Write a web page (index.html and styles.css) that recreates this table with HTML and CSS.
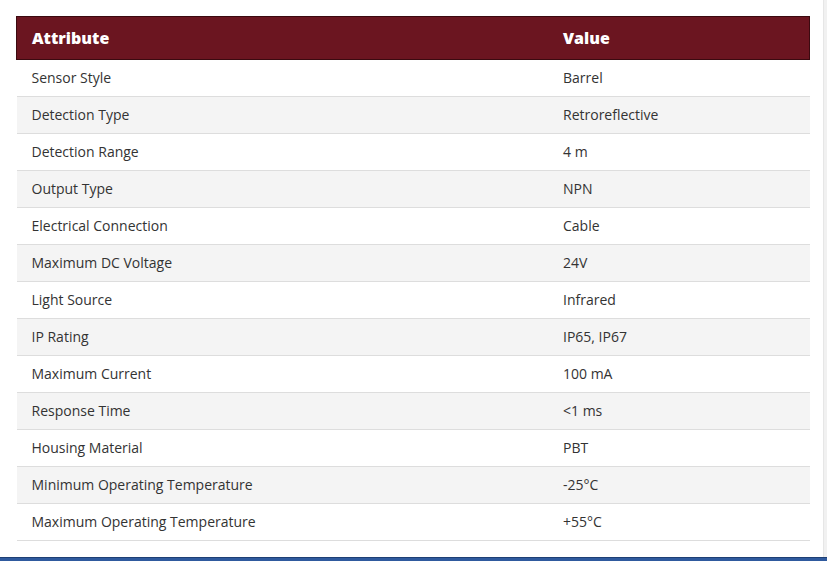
FILE: index.html
```html
<!DOCTYPE html>
<html>
<head>
<meta charset="utf-8">
<link rel="stylesheet" href="styles.css">
</head>
<body>
<div class="page">
  <div class="content">
    <table class="spec">
      <thead>
        <tr><th class="c1">Attribute</th><th>Value</th></tr>
      </thead>
      <tbody>
        <tr><td>Sensor Style</td><td>Barrel</td></tr>
        <tr><td>Detection Type</td><td>Retroreflective</td></tr>
        <tr><td>Detection Range</td><td>4 m</td></tr>
        <tr><td>Output Type</td><td>NPN</td></tr>
        <tr><td>Electrical Connection</td><td>Cable</td></tr>
        <tr><td>Maximum DC Voltage</td><td>24V</td></tr>
        <tr><td>Light Source</td><td>Infrared</td></tr>
        <tr><td>IP Rating</td><td>IP65, IP67</td></tr>
        <tr><td>Maximum Current</td><td>100 mA</td></tr>
        <tr><td>Response Time</td><td>&lt;1 ms</td></tr>
        <tr><td>Housing Material</td><td>PBT</td></tr>
        <tr><td>Minimum Operating Temperature</td><td>-25°C</td></tr>
        <tr><td>Maximum Operating Temperature</td><td>+55°C</td></tr>
      </tbody>
    </table>
  </div>
  <div class="edge"></div>
</div>
<div class="footerbar"></div>
</body>
</html>
```
FILE: styles.css
```css
html, body {
  margin: 0;
  padding: 0;
  background: #ffffff;
}
body {
  font-family: "Open Sans", "Noto Sans", sans-serif;
  color: #333333;
  width: 827px;
  height: 561px;
  overflow: hidden;
}
.page {
  display: flex;
  height: 557px;
}
.content {
  flex: 1;
  padding: 16px 13px 0 16px;
}
.edge {
  width: 4px;
  background: #f1f1f1;
  border-left: 1px solid #e6e6e6;
}
.spec {
  width: 794px;
  border-collapse: collapse;
  font-size: 14px;
}
.spec thead th {
  background: #6b1520;
  color: #ffffff;
  font-weight: 800;
  font-size: 16px;
  text-align: left;
  height: 42px;
  padding: 0 15px;
  border-top: 1px solid #3b0a10;
  border-bottom: 1px solid #3b0a10;
}
.spec thead th:first-child { border-left: 1px solid #3b0a10; }
.spec thead th:last-child { border-right: 1px solid #3b0a10; }
.spec .c1 { width: 501px; }
.spec tbody td {
  height: 36px;
  padding: 0 15px;
  border-bottom: 1px solid #dddddd;
  line-height: 20px;
}
.spec tbody tr:nth-child(even) td {
  background: #f4f4f4;
}
.footerbar {
  height: 4px;
  background: #2f5a9e;
  border-top: 1px solid #1e3f74;
  box-sizing: border-box;
}
```
